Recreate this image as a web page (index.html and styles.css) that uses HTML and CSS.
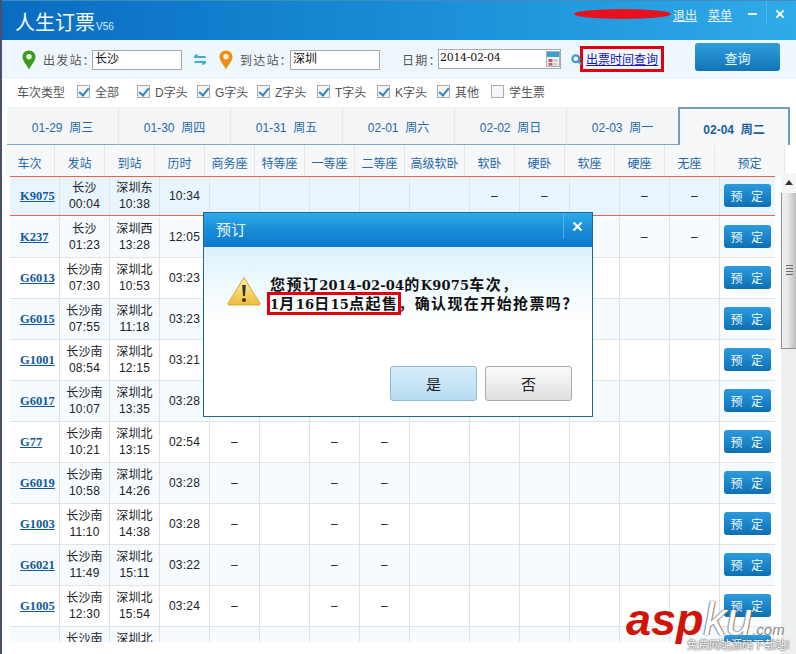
FILE: index.html
```html
<!DOCTYPE html>
<html lang="zh-CN">
<head>
<meta charset="utf-8">
<title>人生订票</title>
<link rel="stylesheet" href="styles.css">
</head>
<body>
<div class="app">
  <header class="titlebar">
    <div class="brand"><span class="brand-name">人生订票</span><span class="brand-ver">V56</span></div>
    <div class="win-actions">
      <span class="redaction"></span>
      <a class="win-link">退出</a>
      <a class="win-link">菜单</a>
      <span class="win-min"></span>
      <span class="win-sep"></span>
      <svg class="win-close" viewBox="0 0 11 11"><path d="M1.5 1.5l8 8M9.5 1.5l-8 8" stroke="#fff" stroke-width="2.2" fill="none"/></svg>
    </div>
  </header>

  <section class="toolbar">
    <svg class="pin" viewBox="0 0 14 20"><path d="M7 .5C3.2.5.5 3.3.5 6.8c0 4.3 4.6 8.600 6.500 12.700 1.900-4.100 6.500-8.400 6.500-12.700C13.500 3.300 10.800.5 7 .5z" fill="#3f9a22"/><circle cx="7" cy="6.800" r="2.700" fill="#e9f6e2"/></svg>
    <label class="tb-label from-label">出发站：</label>
    <div class="tb-input station">长沙</div>
    <svg class="swap" viewBox="0 0 12 11"><path d="M3.500.5L.5 3h11M8.500 10.500l3-2.500H.5" stroke="#3fa9dc" stroke-width="2" fill="none"/></svg>
    <svg class="pin pin-to" viewBox="0 0 14 20"><path d="M7 .5C3.2.5.5 3.3.5 6.8c0 4.3 4.600 8.600 6.500 12.700 1.900-4.100 6.500-8.400 6.500-12.700C13.500 3.300 10.800.5 7 .5z" fill="#ee8f12"/><circle cx="7" cy="6.800" r="2.700" fill="#fdf0dc"/></svg>
    <label class="tb-label to-label">到达站：</label>
    <div class="tb-input station">深圳</div>
    <label class="tb-label date-label">日期：</label>
    <div class="tb-input date">2014-02-04
      <svg class="cal" viewBox="0 0 14 16"><rect x=".5" y=".5" width="13" height="15" fill="#eef2f4" stroke="#9fb0ba"/><rect x="1" y="1" width="12" height="5" fill="#3f9fd0"/><rect x="2.500" y="8" width="4" height="3" fill="#d9534f"/><rect x="7.500" y="8" width="4" height="3" fill="#c5ced4"/><rect x="2.500" y="12" width="4" height="2.500" fill="#d9534f"/><rect x="7.500" y="12" width="4" height="2.500" fill="#c5ced4"/></svg>
    </div>
    <div class="ticket-query">
      <svg class="search" viewBox="0 0 11 11"><circle cx="4.800" cy="4.800" r="3.400" fill="none" stroke="#3e9bd0" stroke-width="2.200"/><path d="M7.500 7.500l2.800 2.800" stroke="#3e9bd0" stroke-width="2"/></svg>
      <a class="query-link">出票时间查询</a>
    </div>
    <button class="query-btn">查询</button>
  </section>

  <section class="filters">
    <span class="filter-title">车次类型</span>
    <span class="check-item"><i class="box on"></i>全部</span>
    <span class="check-item"><i class="box on"></i>D字头</span>
    <span class="check-item"><i class="box on"></i>G字头</span>
    <span class="check-item"><i class="box on"></i>Z字头</span>
    <span class="check-item"><i class="box on"></i>T字头</span>
    <span class="check-item"><i class="box on"></i>K字头</span>
    <span class="check-item short"><i class="box on"></i>其他</span>
    <span class="check-item"><i class="box"></i>学生票</span>
  </section>

  <nav class="tabs">
    <span class="tab">01-29&nbsp; 周三</span>
    <span class="tab">01-30&nbsp; 周四</span>
    <span class="tab">01-31&nbsp; 周五</span>
    <span class="tab">02-01&nbsp; 周六</span>
    <span class="tab">02-02&nbsp; 周日</span>
    <span class="tab">02-03&nbsp; 周一</span>
    <span class="tab active">02-04&nbsp; 周二</span>
  </nav>

  <div class="thead">
    <span>车次</span><span>发站</span><span>到站</span><span>历时</span><span>商务座</span><span>特等座</span><span>一等座</span><span>二等座</span><span>高级软卧</span><span>软卧</span><span>硬卧</span><span>软座</span><span>硬座</span><span>无座</span><span>预定</span>
  </div>

  <div class="table-area">
    <div class="rows">
      <div class="row selected"><a class="train">K9075</a><div>长沙<br>00:04</div><div>深圳东<br>10:38</div><div>10:34</div><div></div><div></div><div></div><div></div><div></div><div>–</div><div>–</div><div></div><div>–</div><div>–</div><div class="act"><button class="book">预 定</button></div></div>
      <div class="row alt"><a class="train">K237</a><div>长沙<br>01:23</div><div>深圳西<br>13:28</div><div>12:05</div><div></div><div></div><div></div><div></div><div></div><div>–</div><div>–</div><div></div><div>–</div><div>–</div><div class="act"><button class="book">预 定</button></div></div>
      <div class="row"><a class="train">G6013</a><div>长沙南<br>07:30</div><div>深圳北<br>10:53</div><div>03:23</div><div>–</div><div></div><div>–</div><div>–</div><div></div><div></div><div></div><div></div><div></div><div></div><div class="act"><button class="book">预 定</button></div></div>
      <div class="row alt"><a class="train">G6015</a><div>长沙南<br>07:55</div><div>深圳北<br>11:18</div><div>03:23</div><div>–</div><div></div><div>–</div><div>–</div><div></div><div></div><div></div><div></div><div></div><div></div><div class="act"><button class="book">预 定</button></div></div>
      <div class="row"><a class="train">G1001</a><div>长沙南<br>08:54</div><div>深圳北<br>12:15</div><div>03:21</div><div>–</div><div></div><div>–</div><div>–</div><div></div><div></div><div></div><div></div><div></div><div></div><div class="act"><button class="book">预 定</button></div></div>
      <div class="row alt"><a class="train">G6017</a><div>长沙南<br>10:07</div><div>深圳北<br>13:35</div><div>03:28</div><div>–</div><div></div><div>–</div><div>–</div><div></div><div></div><div></div><div></div><div></div><div></div><div class="act"><button class="book">预 定</button></div></div>
      <div class="row"><a class="train">G77</a><div>长沙南<br>10:21</div><div>深圳北<br>13:15</div><div>02:54</div><div>–</div><div></div><div>–</div><div>–</div><div></div><div></div><div></div><div></div><div></div><div></div><div class="act"><button class="book">预 定</button></div></div>
      <div class="row alt"><a class="train">G6019</a><div>长沙南<br>10:58</div><div>深圳北<br>14:26</div><div>03:28</div><div>–</div><div></div><div>–</div><div>–</div><div></div><div></div><div></div><div></div><div></div><div></div><div class="act"><button class="book">预 定</button></div></div>
      <div class="row"><a class="train">G1003</a><div>长沙南<br>11:10</div><div>深圳北<br>14:38</div><div>03:28</div><div>–</div><div></div><div>–</div><div>–</div><div></div><div></div><div></div><div></div><div></div><div></div><div class="act"><button class="book">预 定</button></div></div>
      <div class="row alt"><a class="train">G6021</a><div>长沙南<br>11:49</div><div>深圳北<br>15:11</div><div>03:22</div><div>–</div><div></div><div>–</div><div>–</div><div></div><div></div><div></div><div></div><div></div><div></div><div class="act"><button class="book">预 定</button></div></div>
      <div class="row"><a class="train">G1005</a><div>长沙南<br>12:30</div><div>深圳北<br>15:54</div><div>03:24</div><div>–</div><div></div><div>–</div><div>–</div><div></div><div></div><div></div><div></div><div></div><div></div><div class="act"><button class="book">预 定</button></div></div>
      <div class="row alt"><a class="train"></a><div>长沙南<br>&nbsp;</div><div>深圳北<br>&nbsp;</div><div></div><div></div><div></div><div></div><div></div><div></div><div></div><div></div><div></div><div></div><div></div><div class="act"><button class="book">预 定</button></div></div>
    </div>
    <div class="scrollbar">
      <div class="sb-up"></div>
      <div class="sb-thumb"><i></i><i></i><i></i><i></i></div>
    </div>
  </div>
</div>

<div class="dialog">
  <div class="dialog-head">
    <span class="dialog-title">预订</span>
    <span class="dialog-sep"></span>
    <svg class="dialog-close" viewBox="0 0 11 11"><path d="M1.500 1.500l8 8M9.500 1.500l-8 8" stroke="#fff" stroke-width="2.200" fill="none"/></svg>
  </div>
  <div class="dialog-body">
    <div class="dialog-msg">
      <svg class="warn" viewBox="0 0 34 30"><defs><linearGradient id="wg" x1="0" y1="0" x2="0" y2="1"><stop offset="0" stop-color="#fff1b0"/><stop offset="1" stop-color="#f0bb35"/></linearGradient></defs><path d="M17 1.500L33 27.500q.5 1.500-1.500 1.500h-29q-2 0-1.500-1.500z" fill="url(#wg)" stroke="#d9a630"/><path d="M15.200 9h3.600l-.8 11h-2z" fill="#3a3320"/><circle cx="17" cy="24" r="2" fill="#3a3320"/></svg>
      <p class="msg-text">您预订<b class="num">2014-02-04</b>的<b class="num">K9075</b>车次，<br><span class="mark"><b class="num">1</b>月<b class="num">16</b>日<b class="num">15</b>点起售</span>，确认现在开始抢票吗？</p>
    </div>
    <div class="dialog-actions">
      <button class="dlg-btn yes">是</button>
      <button class="dlg-btn no">否</button>
    </div>
  </div>
</div>

<div class="watermark">
  <span class="wm-asp">asp</span><span class="wm-ku">ku</span><span class="wm-com">.com</span>
  <span class="wm-tag">免费网站源码下载站!</span>
</div>
</body>
</html>
```

FILE: styles.css
```css
* { box-sizing: border-box; }
html, body { margin: 0; padding: 0; }
body {
  width: 796px;
  height: 654px;
  overflow: hidden;
  position: relative;
  background: #47506e;
  font-family: "Liberation Sans", "Noto Sans CJK SC", sans-serif;
  font-size: 12px;
  color: #222;
}
.app {
  margin-left: 2px;
  width: 794px;
  height: 654px;
  background: #fff;
  display: flex;
  flex-direction: column;
  overflow: hidden;
}

/* title bar */
.titlebar {
  height: 40px;
  flex: none;
  display: flex;
  align-items: flex-start;
  justify-content: space-between;
  background: linear-gradient(90deg, #0a6cc0 0%, #1789d4 45%, #2faae8 100%);
  border-top: 1px solid #3e8dbb;
  color: #fff;
}
.brand { margin: 9px 0 0 13px; display: flex; align-items: baseline; }
.brand-name { font-size: 20px; line-height: 26px; color: #f4fbff; }
.brand-ver { font-size: 10px; margin-left: 1px; color: #d7edfa; }
.win-actions { display: flex; align-items: center; height: 26px; }
.redaction {
  width: 97px;
  height: 10px;
  margin-right: 2px;
  background: #e8101c;
  border-radius: 50% / 50%;
}
.win-link {
  font-size: 12px;
  color: #e9f6fd;
  text-decoration: underline;
  margin-right: 11px;
}
.win-min { width: 9px; height: 2px; background: #eaf6fd; margin: 0 9px 0 5px; }
.win-sep { width: 1px; height: 23px; background: #4fb9ec; margin-top: -4px; }
.win-close { width: 10px; height: 10px; margin: 0 11px 0 8px; }

/* toolbar */
.toolbar {
  height: 39px;
  flex: none;
  display: flex;
  align-items: center;
  background: #eef7fc;
  color: #555;
}
.pin { width: 14px; height: 20px; margin-left: 20px; flex: none; }
.pin-to { margin-left: 13px; }
.tb-label { font-size: 12px; letter-spacing: 1.200px; white-space: nowrap; }
.from-label { margin-left: 7px; width: 49px; }
.to-label { margin-left: 7px; width: 50px; }
.date-label { margin-left: 22px; width: 36px; }
.tb-input {
  height: 20px;
  border: 1px solid #a4a9ac;
  background: #fff;
  color: #111;
  font-size: 12px;
  line-height: 16px;
  padding-left: 2px;
  position: relative;
}
.station { width: 90px; }
.date { width: 123px; margin-top: -2px; padding-left: 1px; font-size: 11px; font-family: "DejaVu Serif", "Noto Sans CJK SC", serif; letter-spacing: -.3px; }
.swap { width: 12px; height: 11px; margin-left: 12px; flex: none; }
.cal { position: absolute; right: 0; top: 1px; width: 14px; height: 16px; }
.ticket-query {
  width: 84px;
  height: 26px;
  margin-left: 19px;
  margin-top: -2px;
  border: 3px solid #e00016;
  background: #f3f9fd;
  display: flex;
  align-items: center;
  position: relative;
}
.search { position: absolute; left: -12px; top: 5px; width: 11px; height: 11px; }
.query-link { color: #1414c4; text-decoration: underline; font-size: 12px; margin-left: 3px; white-space: nowrap; }
.query-btn {
  width: 85px;
  height: 28px;
  margin-left: 31px;
  margin-top: -5px;
  border: 0;
  border-radius: 3px;
  background: linear-gradient(180deg, #2f9ddc 0%, #1f87c8 55%, #0f74b4 100%);
  color: #e8f6ff;
  font: 13px "Liberation Sans", "Noto Sans CJK SC", sans-serif;
}

/* filters */
.filters {
  height: 28px;
  flex: none;
  display: flex;
  align-items: center;
  padding: 0 0 3px 15px;
  color: #555;
}
.filter-title { width: 60px; }
.check-item { width: 60px; display: flex; align-items: center; white-space: nowrap; }
.check-item.short { width: 54px; }
.box {
  width: 13px;
  height: 13px;
  margin-right: 5px;
  border: 1px solid #a9adb0;
  background: #f4f6f7;
  display: block;
  position: relative;
}
.box.on::after {
  content: "";
  position: absolute;
  left: 3px;
  top: 0;
  width: 4px;
  height: 8px;
  border: solid #2f86c8;
  border-width: 0 2px 2px 0;
  transform: rotate(40deg);
}

/* tabs */
.tabs {
  height: 38px;
  flex: none;
  display: flex;
  padding-left: 5px;
}
.tab {
  width: 112px;
  display: flex;
  align-items: center;
  justify-content: center;
  padding-top: 2px;
  background: #f4f5f5;
  border-right: 1px solid #e4e6e7;
  border-bottom: 1px solid #7fa9c6;
  color: #1c6bb0;
  font-size: 12px;
  white-space: pre;
}
.tab.active {
  background: #f6f8f9;
  border: 2px solid #6f9dbb;
  border-bottom: 0;
  font-weight: bold;
  color: #185f9f;
  margin-left: -1px;
}

/* table head */
.thead {
  height: 31px;
  flex: none;
  display: grid;
  grid-template-columns: repeat(8, 50px) 60px repeat(5, 50px) 70px;
  margin-left: 3px;
  width: 780px;
}
.thead span {
  display: flex;
  align-items: center;
  justify-content: center;
  padding-top: 3px;
  background: #f7f8f9;
  border-right: 1px solid #e4e6e8;
  color: #1c68a8;
  font-size: 12px;
  white-space: nowrap;
}

/* rows */
.table-area { flex: 1; min-height: 0; display: flex; }
.rows {
  margin-left: 8px;
  width: 765px;
  height: 466px;
  overflow: hidden;
  flex: none;
}
.row {
  height: 41px;
  display: grid;
  grid-template-columns: repeat(8, 50px) 60px repeat(5, 50px) 55px;
  background: #fff;
  border-bottom: 1px solid #e0e3e6;
  text-align: center;
  line-height: 16px;
  color: #222;
  font-size: 12px;
}
.row > * {
  display: flex;
  align-items: center;
  border-right: 1px solid #e0e3e6;
}
.row > .act { justify-content: center; }
.row > div:not(.act) { display: block; align-self: stretch; padding-top: 4px; letter-spacing: .2px; }
.row.alt { background: #f5fbff; }
.row.selected {
  height: 40px;
  margin-bottom: 1px;
  background: #e8f5fd;
  border-top: 1px solid #e2673f;
  border-bottom: 1px solid #e2673f;
}
.row.selected > div:not(.act) { padding-top: 3px; }
.row > div:nth-child(n+4):not(.act) { line-height: 32px; }
.train {
  padding: 1px 0 0 10px;
  color: #12589c;
  font: bold 12.500px "Liberation Serif", serif;
  text-decoration: underline;
}
.act { border-right: 0 !important; }
.book {
  width: 47px;
  height: 23px;
  margin-top: -2px;
  padding: 0;
  border: 0;
  border-radius: 3px;
  background: linear-gradient(180deg, #2d9ade 0%, #1a84c9 55%, #0e6fb0 100%);
  color: #f0f9ff;
  font: 12px "Liberation Sans", "Noto Sans CJK SC", sans-serif;
  letter-spacing: 1.500px;
  word-spacing: 2px;
}

/* scrollbar */
.scrollbar {
  width: 15px;
  margin-left: 6px;
  margin-top: -3px;
  background: #eef0f0;
  display: flex;
  flex-direction: column;
}
.sb-up {
  height: 20px;
  position: relative;
  background: #f4f5f5;
}
.sb-up::after {
  content: "";
  position: absolute;
  left: 4px;
  top: 7px;
  border: 4px solid transparent;
  border-top: 0;
  border-bottom: 5px solid #333;
}
.sb-thumb {
  height: 156px;
  border-left: 1px solid #8a9196;
  border-bottom: 1px solid #8a9196;
  background: linear-gradient(90deg, #f1f1f1 0%, #e6e6e6 45%, #bdbdbd 100%);
  display: flex;
  flex-direction: column;
  align-items: center;
  justify-content: center;
  gap: 1px;
}
.sb-thumb i { display: block; width: 7px; height: 1px; background: #666; margin-bottom: 1px; }

/* dialog */
.dialog {
  position: absolute;
  left: 203px;
  top: 212px;
  width: 390px;
  height: 205px;
  border: 1px solid #1b6b8f;
  background: #fff;
  display: flex;
  flex-direction: column;
}
.dialog-head {
  height: 34px;
  flex: none;
  display: flex;
  align-items: center;
  background: linear-gradient(180deg, #2dace9 0%, #1a8fd9 45%, #0c78cc 100%);
  padding-left: 12px;
}
.dialog-title { color: #eef8ff; font-size: 15px; flex: 1; margin-top: -3px; }
.dialog-sep { width: 1px; height: 26px; background: #4bb8ec; margin-top: -8px; }
.dialog-close { width: 11px; height: 11px; margin: -7px 9px 0 8px; }
.dialog-body {
  flex: 1;
  display: flex;
  flex-direction: column;
  background: linear-gradient(180deg, #dcf1fb 0%, #f4fbfe 28%, #fff 45%);
}
.dialog-msg { display: flex; padding: 29px 0 0 23px; height: 119px; flex: none; }
.warn { width: 34px; height: 30px; flex: none; }
.msg-text {
  margin: -1px 0 0 9px;
  font-size: 15px;
  line-height: 19px;
  font-weight: bold;
  letter-spacing: 1.400px;
  color: #111;
  white-space: nowrap;
}
.num { font: bold 13px "DejaVu Serif", serif; letter-spacing: .2px; }
.mark { outline: 3px solid #e2000f; outline-offset: 0; }
.dialog-actions { display: flex; justify-content: flex-end; gap: 8px; padding-right: 20px; }
.dlg-btn {
  width: 87px;
  height: 35px;
  border-radius: 3px;
  font: 15px "Liberation Sans", "Noto Sans CJK SC", sans-serif;
  color: #222;
}
.yes { border: 1px solid #8fbdd3; background: linear-gradient(180deg, #d5edf9 0%, #b7dcf0 100%); }
.no { border: 1px solid #a9a9a9; background: linear-gradient(180deg, #fbfbfb 0%, #dedede 100%); }

/* watermark */
.watermark {
  position: absolute;
  left: 626px;
  top: 594px;
  width: 170px;
  height: 60px;
  white-space: nowrap;
  font-family: "Liberation Sans", sans-serif;
  font-style: italic;
  line-height: 50px;
}
.wm-asp { font-size: 45px; font-weight: bold; color: #cf1408; }
.wm-ku { font-size: 46px; color: #fff; text-shadow: 0 0 1px #666, 1px 0 1px #777, -1px 0 1px #999; }
.wm-com { font-size: 15px; color: #888; text-shadow: 0 0 1px #fff; }
.wm-tag {
  position: absolute;
  left: 61px;
  top: 43px;
  font-size: 11px;
  line-height: 14px;
  font-style: normal;
  color: #fff;
  font-family: "Noto Sans CJK SC", sans-serif;
  text-shadow: 0 0 1px #444, 0 0 2px #555;
}
```
